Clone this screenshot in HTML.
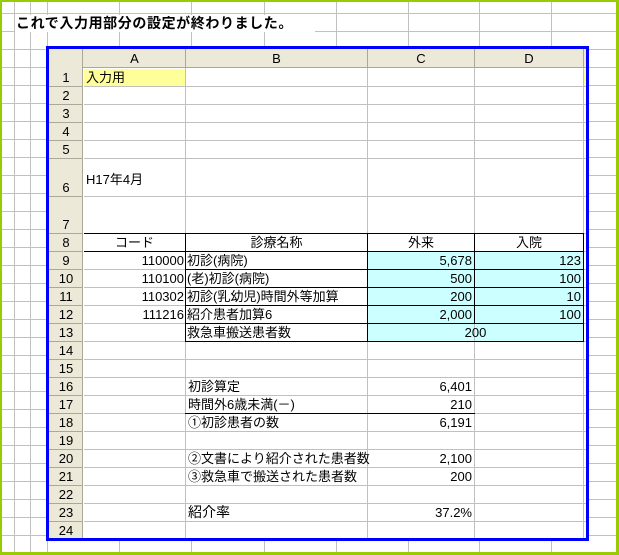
<!DOCTYPE html>
<html><head><meta charset="utf-8">
<style>
*{margin:0;padding:0;box-sizing:border-box}
html,body{width:619px;height:555px;overflow:hidden;background:#fff}
body{position:relative;font-family:"Liberation Sans","Noto Sans CJK JP",sans-serif;font-size:13px;color:#000}
.a{position:absolute}
.bg{position:absolute;left:0;top:0;width:619px;height:555px;
background-image:
repeating-linear-gradient(to bottom,transparent 0,transparent 13px,#c0c0c0 13px,#c0c0c0 14px,transparent 14px,transparent 18px),
linear-gradient(#fff,#fff);}
.v{position:absolute;width:1px;background:#c0c0c0}
.h{position:absolute;height:1px;background:#c0c0c0}
.bk{background:#000}
.t{position:absolute;height:16px;line-height:16px;white-space:nowrap}
.r{text-align:right}
.c{text-align:center}
.lab{position:absolute;left:49px;width:34px;text-align:center;height:16px;line-height:16px}
</style></head><body>
<div class="bg"></div>
<!-- background verticals -->
<div class="v" style="left:14px;top:0;height:555px"></div>
<div class="v" style="left:30px;top:0;height:555px"></div>
<div class="v" style="left:47px;top:0;height:555px"></div>
<div class="v" style="left:119px;top:0;height:555px"></div>
<div class="v" style="left:191px;top:0;height:555px"></div>
<div class="v" style="left:264px;top:0;height:555px"></div>
<div class="v" style="left:336px;top:0;height:555px"></div>
<div class="v" style="left:408px;top:0;height:555px"></div>
<div class="v" style="left:479px;top:0;height:555px"></div>
<div class="v" style="left:551px;top:0;height:555px"></div>
<!-- white behind title -->
<div class="a" style="left:15px;top:15px;width:300px;height:17px;background:#fff"></div>
<div class="t" style="left:16px;top:14px;font-weight:bold;font-size:14px;height:18px;line-height:18px;letter-spacing:0.6px">これで入力用部分の設定が終わりました。</div>

<!-- sheet -->
<div class="a" style="left:46px;top:46px;width:543px;height:495px;border:3px solid #0000ff;background:#fff"></div>
<!-- fills -->
<div class="a" style="left:84px;top:69px;width:101px;height:17px;background:#ffff99"></div>
<div class="a" style="left:584px;top:69px;width:2px;height:17px;background:#ffff99"></div>
<div class="a" style="left:368px;top:252px;width:215px;height:89px;background:#ccffff"></div>
<!-- headers -->
<div class="a" style="left:49px;top:49px;width:537px;height:19px;background:#ece9d8;border-bottom:1px solid #aca899"></div>
<div class="a" style="left:49px;top:49px;width:34px;height:489px;background:#ece9d8;border-right:1px solid #aca899"></div>
<!-- grid verticals -->
<div class="v" style="left:185px;top:49px;height:489px"></div>
<div class="v" style="left:367px;top:49px;height:489px"></div>
<div class="v" style="left:474px;top:49px;height:489px"></div>
<div class="v" style="left:583px;top:49px;height:489px"></div>
<div class="v" style="left:185px;top:49px;height:19px;background:#aca899"></div>
<div class="v" style="left:367px;top:49px;height:19px;background:#aca899"></div>
<div class="v" style="left:474px;top:49px;height:19px;background:#aca899"></div>
<div class="v" style="left:583px;top:49px;height:19px;background:#aca899"></div>
<!-- grid horizontals -->
<div class="h" style="left:84px;top:86px;width:502px"></div>
<div class="h" style="left:84px;top:104px;width:502px"></div>
<div class="h" style="left:84px;top:122px;width:502px"></div>
<div class="h" style="left:84px;top:140px;width:502px"></div>
<div class="h" style="left:84px;top:158px;width:502px"></div>
<div class="h" style="left:84px;top:196px;width:502px"></div>
<div class="h" style="left:84px;top:233px;width:502px"></div>
<div class="h" style="left:84px;top:251px;width:502px"></div>
<div class="h" style="left:84px;top:269px;width:502px"></div>
<div class="h" style="left:84px;top:287px;width:502px"></div>
<div class="h" style="left:84px;top:305px;width:502px"></div>
<div class="h" style="left:84px;top:323px;width:502px"></div>
<div class="h" style="left:84px;top:341px;width:502px"></div>
<div class="h" style="left:84px;top:359px;width:502px"></div>
<div class="h" style="left:84px;top:377px;width:502px"></div>
<div class="h" style="left:84px;top:395px;width:502px"></div>
<div class="h" style="left:84px;top:413px;width:502px"></div>
<div class="h" style="left:84px;top:431px;width:502px"></div>
<div class="h" style="left:84px;top:449px;width:502px"></div>
<div class="h" style="left:84px;top:467px;width:502px"></div>
<div class="h" style="left:84px;top:485px;width:502px"></div>
<div class="h" style="left:84px;top:503px;width:502px"></div>
<div class="h" style="left:84px;top:521px;width:502px"></div>
<!-- row header lines -->
<div class="h" style="left:49px;top:86px;width:34px;background:#aca899"></div>
<div class="h" style="left:49px;top:104px;width:34px;background:#aca899"></div>
<div class="h" style="left:49px;top:122px;width:34px;background:#aca899"></div>
<div class="h" style="left:49px;top:140px;width:34px;background:#aca899"></div>
<div class="h" style="left:49px;top:158px;width:34px;background:#aca899"></div>
<div class="h" style="left:49px;top:196px;width:34px;background:#aca899"></div>
<div class="h" style="left:49px;top:233px;width:34px;background:#aca899"></div>
<div class="h" style="left:49px;top:251px;width:34px;background:#aca899"></div>
<div class="h" style="left:49px;top:269px;width:34px;background:#aca899"></div>
<div class="h" style="left:49px;top:287px;width:34px;background:#aca899"></div>
<div class="h" style="left:49px;top:305px;width:34px;background:#aca899"></div>
<div class="h" style="left:49px;top:323px;width:34px;background:#aca899"></div>
<div class="h" style="left:49px;top:341px;width:34px;background:#aca899"></div>
<div class="h" style="left:49px;top:359px;width:34px;background:#aca899"></div>
<div class="h" style="left:49px;top:377px;width:34px;background:#aca899"></div>
<div class="h" style="left:49px;top:395px;width:34px;background:#aca899"></div>
<div class="h" style="left:49px;top:413px;width:34px;background:#aca899"></div>
<div class="h" style="left:49px;top:431px;width:34px;background:#aca899"></div>
<div class="h" style="left:49px;top:449px;width:34px;background:#aca899"></div>
<div class="h" style="left:49px;top:467px;width:34px;background:#aca899"></div>
<div class="h" style="left:49px;top:485px;width:34px;background:#aca899"></div>
<div class="h" style="left:49px;top:503px;width:34px;background:#aca899"></div>
<div class="h" style="left:49px;top:521px;width:34px;background:#aca899"></div>
<!-- black borders table -->
<div class="h bk" style="left:84px;top:233px;width:500px"></div>
<div class="h bk" style="left:84px;top:251px;width:500px"></div>
<div class="h bk" style="left:186px;top:269px;width:398px"></div>
<div class="h bk" style="left:186px;top:287px;width:398px"></div>
<div class="h bk" style="left:186px;top:305px;width:398px"></div>
<div class="h bk" style="left:186px;top:323px;width:398px"></div>
<div class="h bk" style="left:186px;top:341px;width:398px"></div>
<div class="v bk" style="left:185px;top:233px;height:109px"></div>
<div class="v bk" style="left:367px;top:233px;height:109px"></div>
<div class="v bk" style="left:474px;top:233px;height:90px"></div>
<div class="v bk" style="left:583px;top:233px;height:109px"></div>
<div class="h bk" style="left:185px;top:413px;width:290px"></div>
<div class="a" style="left:475px;top:324px;width:108px;height:17px;background:#ccffff"></div>

<!-- column headers -->
<div class="t c" style="left:84px;top:51px;width:101px">A</div>
<div class="t c" style="left:186px;top:51px;width:181px">B</div>
<div class="t c" style="left:368px;top:51px;width:106px">C</div>
<div class="t c" style="left:475px;top:51px;width:108px">D</div>
<!-- row labels -->
<div class="lab" style="top:70px">1</div>
<div class="lab" style="top:88px">2</div>
<div class="lab" style="top:106px">3</div>
<div class="lab" style="top:124px">4</div>
<div class="lab" style="top:142px">5</div>
<div class="lab" style="top:180px">6</div>
<div class="lab" style="top:217px">7</div>
<div class="lab" style="top:235px">8</div>
<div class="lab" style="top:253px">9</div>
<div class="lab" style="top:271px">10</div>
<div class="lab" style="top:289px">11</div>
<div class="lab" style="top:307px">12</div>
<div class="lab" style="top:325px">13</div>
<div class="lab" style="top:343px">14</div>
<div class="lab" style="top:361px">15</div>
<div class="lab" style="top:379px">16</div>
<div class="lab" style="top:397px">17</div>
<div class="lab" style="top:415px">18</div>
<div class="lab" style="top:433px">19</div>
<div class="lab" style="top:451px">20</div>
<div class="lab" style="top:469px">21</div>
<div class="lab" style="top:487px">22</div>
<div class="lab" style="top:505px">23</div>
<div class="lab" style="top:523px">24</div>

<!-- content -->
<div class="t" style="left:86px;top:70px">入力用</div>
<div class="t" style="left:86px;top:172px">H17年4月</div>
<div class="t c" style="left:84px;top:235px;width:101px">コード</div>
<div class="t c" style="left:186px;top:235px;width:181px">診療名称</div>
<div class="t c" style="left:368px;top:235px;width:106px">外来</div>
<div class="t c" style="left:475px;top:235px;width:108px">入院</div>

<div class="t r" style="left:84px;top:253px;width:100px">110000</div>
<div class="t r" style="left:84px;top:271px;width:100px">110100</div>
<div class="t r" style="left:84px;top:289px;width:100px">110302</div>
<div class="t r" style="left:84px;top:307px;width:100px">111216</div>
<div class="t" style="left:187px;top:253px">初診(病院)</div>
<div class="t" style="left:187px;top:271px">(老)初診(病院)</div>
<div class="t" style="left:187px;top:289px;width:180px;overflow:hidden">初診(乳幼児)時間外等加算</div>
<div class="t" style="left:187px;top:307px">紹介患者加算6</div>
<div class="t" style="left:187px;top:325px">救急車搬送患者数</div>
<div class="t r" style="left:368px;top:253px;width:104px">5,678</div>
<div class="t r" style="left:368px;top:271px;width:104px">500</div>
<div class="t r" style="left:368px;top:289px;width:104px">200</div>
<div class="t r" style="left:368px;top:307px;width:104px">2,000</div>
<div class="t r" style="left:475px;top:253px;width:106px">123</div>
<div class="t r" style="left:475px;top:271px;width:106px">100</div>
<div class="t r" style="left:475px;top:289px;width:106px">10</div>
<div class="t r" style="left:475px;top:307px;width:106px">100</div>
<div class="t c" style="left:368px;top:325px;width:215px">200</div>

<div class="t" style="left:188px;top:379px">初診算定</div>
<div class="t" style="left:188px;top:397px">時間外6歳未満(－)</div>
<div class="t" style="left:188px;top:415px">①初診患者の数</div>
<div class="t" style="left:188px;top:451px">②文書により紹介された患者数</div>
<div class="t" style="left:188px;top:469px">③救急車で搬送された患者数</div>
<div class="t" style="left:188px;top:504px;font-size:14px">紹介率</div>
<div class="t r" style="left:368px;top:379px;width:104px">6,401</div>
<div class="t r" style="left:368px;top:397px;width:104px">210</div>
<div class="t r" style="left:368px;top:415px;width:104px">6,191</div>
<div class="t r" style="left:368px;top:451px;width:104px">2,100</div>
<div class="t r" style="left:368px;top:469px;width:104px">200</div>
<div class="t r" style="left:368px;top:505px;width:104px">37.2%</div>

<!-- green frame -->
<div class="a" style="left:0;top:0;width:619px;height:555px;border:2px solid #99cc00;border-right-width:3px;border-bottom-width:3px"></div>
</body></html>
